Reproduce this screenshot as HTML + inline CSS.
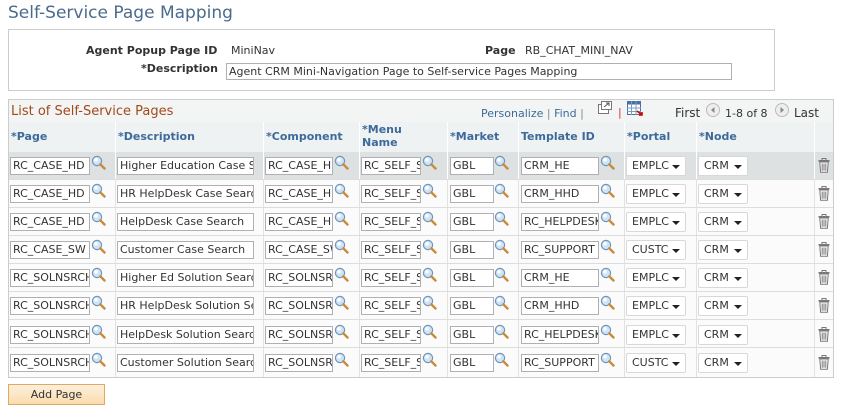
<!DOCTYPE html>
<html><head><style>
*{box-sizing:border-box;margin:0;padding:0}
body{width:842px;height:411px;background:#fff;font-family:"DejaVu Sans","Liberation Sans",sans-serif;font-size:11px;color:#333;position:relative;overflow:hidden}
.a{position:absolute;white-space:nowrap}
.lbl{font-weight:bold;color:#333}
.in{position:absolute;height:18px;border:1px solid #b0b0b0;background:#fff;font-size:11px;line-height:16px;padding-left:2px;overflow:hidden;white-space:nowrap;color:#333}
.sel{position:absolute;height:20px;border:1px solid #d8d8d8;border-radius:2px;background:#fff;font-size:11px;line-height:18px;padding-left:5px;padding-right:16px;overflow:hidden;color:#333}
.sel:after{content:"";position:absolute;right:5px;top:8px;border-left:4px solid transparent;border-right:4px solid transparent;border-top:4px solid #222}
.mg{position:absolute;width:15px;height:15px}
.row{position:absolute;left:9px;width:824px;height:28px;border-bottom:1px solid #ddd}
.vl{position:absolute;top:0;bottom:0;width:1px;background:#e2e2e2}
.th{position:absolute;top:122px;height:30px;font-weight:bold;color:#3d6a9a;font-size:11px;line-height:13px;padding:8px 0 0 3px;white-space:nowrap}
.tr{position:absolute;width:12px;height:15px}
</style></head><body>
<svg width="0" height="0" style="position:absolute"><defs>
<symbol id="m" viewBox="0 0 15 15"><circle cx="6" cy="6" r="4.6" fill="#cfe4f7" stroke="#6f95b8" stroke-width="1.2"/><circle cx="5" cy="4.8" r="1.8" fill="#fff"/><path d="M9.3 9.3 L13.5 13.5" stroke="#c98a3a" stroke-width="2.4" stroke-linecap="round"/></symbol>
<symbol id="t" viewBox="0 0 12 15"><rect x="0.5" y="2" width="11" height="1.6" fill="#777"/><rect x="4" y="0.5" width="4" height="2" fill="none" stroke="#777"/><path d="M1.8 4 L2.6 14.2 H9.4 L10.2 4 Z" fill="#fff" stroke="#777"/><path d="M4.2 5.5 V12.8 M6 5.5 V12.8 M7.8 5.5 V12.8" stroke="#777"/></symbol>
</defs></svg>

<div class="a" style="left:8px;top:3px;font-size:17px;color:#4a6b8e">Self-Service Page Mapping</div>

<div class="a" style="left:8px;top:29px;width:767px;height:62px;border:1px solid #ccc"></div>
<div class="a lbl" style="left:86px;top:44px">Agent Popup Page ID</div>
<div class="a" style="left:231px;top:44px">MiniNav</div>
<div class="a lbl" style="left:485px;top:44px">Page</div>
<div class="a" style="left:525px;top:44px">RB_CHAT_MINI_NAV</div>
<div class="a lbl" style="left:141px;top:62px">*Description</div>
<div class="in" style="left:226px;top:63px;width:506px;height:17px;line-height:15px">Agent CRM Mini-Navigation Page to Self-service Pages Mapping</div>

<div class="a" style="left:8px;top:99px;width:826px;height:279px;border:1px solid #ccc;background:#fafafa"></div>
<div class="a" style="left:9px;top:100px;width:824px;height:22px;background:#f3f5f5"></div>
<div class="a" style="left:11px;top:104px;font-size:13px;color:#a04a1a">List of Self-Service Pages</div>
<div class="a" style="left:481px;top:107px;color:#3d6a9a">Personalize <span style="color:#888">|</span> Find <span style="color:#888">|</span></div>
<svg class="a" style="left:598px;top:101px" width="14" height="13" viewBox="0 0 14 13"><rect x="0.5" y="3.5" width="10" height="9" fill="#fff" stroke="#777"/><rect x="3.5" y="0.5" width="10" height="8" fill="#fff" stroke="#777"/><path d="M6 6 L11 2 M8 2 H11 V5" stroke="#555" fill="none"/></svg>
<div class="a" style="left:618px;top:106px;color:#c33">|</div>
<svg class="a" style="left:627px;top:101px" width="16" height="15" viewBox="0 0 16 15"><rect x="0.5" y="0.5" width="13" height="13" fill="#fff" stroke="#4a6fa5"/><rect x="0.5" y="0.5" width="13" height="3" fill="#4a6fa5"/><path d="M4.5 0 V14 M9 0 V14 M0 7 H14 M0 10.5 H14" stroke="#7a9cc8"/><path d="M10 10 L15 14 M12 14 H15 V11" stroke="#c00" stroke-width="1.6" fill="none"/></svg>
<div class="a" style="left:675px;top:106px;font-size:12px;color:#333">First</div>
<svg class="a" style="left:706px;top:103px" width="14" height="14"><circle cx="7" cy="7" r="6.5" fill="#eee" stroke="#bbb"/><path d="M8.5 4 L5 7 L8.5 10Z" fill="#888"/></svg>
<div class="a" style="left:725px;top:107px;color:#333">1-8 of 8</div>
<svg class="a" style="left:775px;top:103px" width="14" height="14"><circle cx="7" cy="7" r="6.5" fill="#eee" stroke="#bbb"/><path d="M5.5 4 L9 7 L5.5 10Z" fill="#888"/></svg>
<div class="a" style="left:794px;top:106px;font-size:12px;color:#333">Last</div>

<div class="a" style="left:9px;top:122px;width:824px;height:30px;background:#eff2f3"></div>
<div class="th" style="left:8px">*Page</div>
<div class="th" style="left:115px">*Description</div>
<div class="th" style="left:263px">*Component</div>
<div class="th" style="left:359px;padding-top:1px">*Menu<br>Name</div>
<div class="th" style="left:447px">*Market</div>
<div class="th" style="left:518px">Template ID</div>
<div class="th" style="left:624px">*Portal</div>
<div class="th" style="left:696px">*Node</div>
<div class="a" style="left:115px;top:122px;width:1px;height:30px;background:#fff"></div>
<div class="a" style="left:263px;top:122px;width:1px;height:30px;background:#fff"></div>
<div class="a" style="left:359px;top:122px;width:1px;height:30px;background:#fff"></div>
<div class="a" style="left:447px;top:122px;width:1px;height:30px;background:#fff"></div>
<div class="a" style="left:518px;top:122px;width:1px;height:30px;background:#fff"></div>
<div class="a" style="left:624px;top:122px;width:1px;height:30px;background:#fff"></div>
<div class="a" style="left:696px;top:122px;width:1px;height:30px;background:#fff"></div>
<div class="a" style="left:814px;top:122px;width:1px;height:30px;background:#fff"></div>

<div class="row" style="top:152px;background:#dde1e1"><div class="vl" style="left:106px;background:#fff"></div><div class="vl" style="left:254px;background:#fff"></div><div class="vl" style="left:350px;background:#fff"></div><div class="vl" style="left:438px;background:#fff"></div><div class="vl" style="left:509px;background:#fff"></div><div class="vl" style="left:615px;background:#fff"></div><div class="vl" style="left:687px;background:#fff"></div><div class="vl" style="left:805px;background:#fff"></div>
<div class="in" style="left:1px;top:5px;width:80px">RC_CASE_HD</div><svg class="mg" style="left:82px;top:3px"><use href="#m"/></svg>
<div class="in" style="left:108px;top:5px;width:137px">Higher Education Case S</div>
<div class="in" style="left:256px;top:5px;width:68px">RC_CASE_HD</div><svg class="mg" style="left:325px;top:3px"><use href="#m"/></svg>
<div class="in" style="left:352px;top:5px;width:60px">RC_SELF_SE</div><svg class="mg" style="left:413px;top:3px"><use href="#m"/></svg>
<div class="in" style="left:441px;top:5px;width:44px">GBL</div><svg class="mg" style="left:485px;top:3px"><use href="#m"/></svg>
<div class="in" style="left:512px;top:5px;width:78px">CRM_HE</div><svg class="mg" style="left:591px;top:3px"><use href="#m"/></svg>
<div class="sel" style="left:617px;top:4px;width:60px">EMPLC</div>
<div class="sel" style="left:689px;top:4px;width:50px">CRM</div>
<svg class="tr" style="left:809px;top:6px"><use href="#t"/></svg></div>

<div class="row" style="top:180px;background:#fbfbfb"><div class="vl" style="left:106px"></div><div class="vl" style="left:254px"></div><div class="vl" style="left:350px"></div><div class="vl" style="left:438px"></div><div class="vl" style="left:509px"></div><div class="vl" style="left:615px"></div><div class="vl" style="left:687px"></div><div class="vl" style="left:805px"></div>
<div class="in" style="left:1px;top:5px;width:80px">RC_CASE_HD</div><svg class="mg" style="left:82px;top:3px"><use href="#m"/></svg>
<div class="in" style="left:108px;top:5px;width:137px">HR HelpDesk Case Searc</div>
<div class="in" style="left:256px;top:5px;width:68px">RC_CASE_HD</div><svg class="mg" style="left:325px;top:3px"><use href="#m"/></svg>
<div class="in" style="left:352px;top:5px;width:60px">RC_SELF_SE</div><svg class="mg" style="left:413px;top:3px"><use href="#m"/></svg>
<div class="in" style="left:441px;top:5px;width:44px">GBL</div><svg class="mg" style="left:485px;top:3px"><use href="#m"/></svg>
<div class="in" style="left:512px;top:5px;width:78px">CRM_HHD</div><svg class="mg" style="left:591px;top:3px"><use href="#m"/></svg>
<div class="sel" style="left:617px;top:4px;width:60px">EMPLC</div>
<div class="sel" style="left:689px;top:4px;width:50px">CRM</div>
<svg class="tr" style="left:809px;top:6px"><use href="#t"/></svg></div>

<div class="row" style="top:208px;background:#fbfbfb"><div class="vl" style="left:106px"></div><div class="vl" style="left:254px"></div><div class="vl" style="left:350px"></div><div class="vl" style="left:438px"></div><div class="vl" style="left:509px"></div><div class="vl" style="left:615px"></div><div class="vl" style="left:687px"></div><div class="vl" style="left:805px"></div>
<div class="in" style="left:1px;top:5px;width:80px">RC_CASE_HD</div><svg class="mg" style="left:82px;top:3px"><use href="#m"/></svg>
<div class="in" style="left:108px;top:5px;width:137px">HelpDesk Case Search</div>
<div class="in" style="left:256px;top:5px;width:68px">RC_CASE_HD</div><svg class="mg" style="left:325px;top:3px"><use href="#m"/></svg>
<div class="in" style="left:352px;top:5px;width:60px">RC_SELF_SE</div><svg class="mg" style="left:413px;top:3px"><use href="#m"/></svg>
<div class="in" style="left:441px;top:5px;width:44px">GBL</div><svg class="mg" style="left:485px;top:3px"><use href="#m"/></svg>
<div class="in" style="left:512px;top:5px;width:78px">RC_HELPDESK</div><svg class="mg" style="left:591px;top:3px"><use href="#m"/></svg>
<div class="sel" style="left:617px;top:4px;width:60px">EMPLC</div>
<div class="sel" style="left:689px;top:4px;width:50px">CRM</div>
<svg class="tr" style="left:809px;top:6px"><use href="#t"/></svg></div>

<div class="row" style="top:236px;background:#fbfbfb"><div class="vl" style="left:106px"></div><div class="vl" style="left:254px"></div><div class="vl" style="left:350px"></div><div class="vl" style="left:438px"></div><div class="vl" style="left:509px"></div><div class="vl" style="left:615px"></div><div class="vl" style="left:687px"></div><div class="vl" style="left:805px"></div>
<div class="in" style="left:1px;top:5px;width:80px">RC_CASE_SW</div><svg class="mg" style="left:82px;top:3px"><use href="#m"/></svg>
<div class="in" style="left:108px;top:5px;width:137px">Customer Case Search</div>
<div class="in" style="left:256px;top:5px;width:68px">RC_CASE_SW</div><svg class="mg" style="left:325px;top:3px"><use href="#m"/></svg>
<div class="in" style="left:352px;top:5px;width:60px">RC_SELF_SE</div><svg class="mg" style="left:413px;top:3px"><use href="#m"/></svg>
<div class="in" style="left:441px;top:5px;width:44px">GBL</div><svg class="mg" style="left:485px;top:3px"><use href="#m"/></svg>
<div class="in" style="left:512px;top:5px;width:78px">RC_SUPPORT</div><svg class="mg" style="left:591px;top:3px"><use href="#m"/></svg>
<div class="sel" style="left:617px;top:4px;width:60px">CUSTC</div>
<div class="sel" style="left:689px;top:4px;width:50px">CRM</div>
<svg class="tr" style="left:809px;top:6px"><use href="#t"/></svg></div>

<div class="row" style="top:264px;background:#fbfbfb"><div class="vl" style="left:106px"></div><div class="vl" style="left:254px"></div><div class="vl" style="left:350px"></div><div class="vl" style="left:438px"></div><div class="vl" style="left:509px"></div><div class="vl" style="left:615px"></div><div class="vl" style="left:687px"></div><div class="vl" style="left:805px"></div>
<div class="in" style="left:1px;top:5px;width:80px">RC_SOLNSRCH</div><svg class="mg" style="left:82px;top:3px"><use href="#m"/></svg>
<div class="in" style="left:108px;top:5px;width:137px">Higher Ed Solution Searc</div>
<div class="in" style="left:256px;top:5px;width:68px">RC_SOLNSRCH</div><svg class="mg" style="left:325px;top:3px"><use href="#m"/></svg>
<div class="in" style="left:352px;top:5px;width:60px">RC_SELF_SE</div><svg class="mg" style="left:413px;top:3px"><use href="#m"/></svg>
<div class="in" style="left:441px;top:5px;width:44px">GBL</div><svg class="mg" style="left:485px;top:3px"><use href="#m"/></svg>
<div class="in" style="left:512px;top:5px;width:78px">CRM_HE</div><svg class="mg" style="left:591px;top:3px"><use href="#m"/></svg>
<div class="sel" style="left:617px;top:4px;width:60px">EMPLC</div>
<div class="sel" style="left:689px;top:4px;width:50px">CRM</div>
<svg class="tr" style="left:809px;top:6px"><use href="#t"/></svg></div>

<div class="row" style="top:292px;background:#fbfbfb"><div class="vl" style="left:106px"></div><div class="vl" style="left:254px"></div><div class="vl" style="left:350px"></div><div class="vl" style="left:438px"></div><div class="vl" style="left:509px"></div><div class="vl" style="left:615px"></div><div class="vl" style="left:687px"></div><div class="vl" style="left:805px"></div>
<div class="in" style="left:1px;top:5px;width:80px">RC_SOLNSRCH</div><svg class="mg" style="left:82px;top:3px"><use href="#m"/></svg>
<div class="in" style="left:108px;top:5px;width:137px">HR HelpDesk Solution Se</div>
<div class="in" style="left:256px;top:5px;width:68px">RC_SOLNSRCH</div><svg class="mg" style="left:325px;top:3px"><use href="#m"/></svg>
<div class="in" style="left:352px;top:5px;width:60px">RC_SELF_SE</div><svg class="mg" style="left:413px;top:3px"><use href="#m"/></svg>
<div class="in" style="left:441px;top:5px;width:44px">GBL</div><svg class="mg" style="left:485px;top:3px"><use href="#m"/></svg>
<div class="in" style="left:512px;top:5px;width:78px">CRM_HHD</div><svg class="mg" style="left:591px;top:3px"><use href="#m"/></svg>
<div class="sel" style="left:617px;top:4px;width:60px">EMPLC</div>
<div class="sel" style="left:689px;top:4px;width:50px">CRM</div>
<svg class="tr" style="left:809px;top:6px"><use href="#t"/></svg></div>

<div class="row" style="top:320px;background:#fbfbfb"><div class="vl" style="left:106px"></div><div class="vl" style="left:254px"></div><div class="vl" style="left:350px"></div><div class="vl" style="left:438px"></div><div class="vl" style="left:509px"></div><div class="vl" style="left:615px"></div><div class="vl" style="left:687px"></div><div class="vl" style="left:805px"></div>
<div class="in" style="left:1px;top:6px;width:80px">RC_SOLNSRCH</div><svg class="mg" style="left:82px;top:4px"><use href="#m"/></svg>
<div class="in" style="left:108px;top:6px;width:137px">HelpDesk Solution Searc</div>
<div class="in" style="left:256px;top:6px;width:68px">RC_SOLNSRCH</div><svg class="mg" style="left:325px;top:4px"><use href="#m"/></svg>
<div class="in" style="left:352px;top:6px;width:60px">RC_SELF_SE</div><svg class="mg" style="left:413px;top:4px"><use href="#m"/></svg>
<div class="in" style="left:441px;top:6px;width:44px">GBL</div><svg class="mg" style="left:485px;top:4px"><use href="#m"/></svg>
<div class="in" style="left:512px;top:6px;width:78px">RC_HELPDESK</div><svg class="mg" style="left:591px;top:4px"><use href="#m"/></svg>
<div class="sel" style="left:617px;top:5px;width:60px">EMPLC</div>
<div class="sel" style="left:689px;top:5px;width:50px">CRM</div>
<svg class="tr" style="left:809px;top:7px"><use href="#t"/></svg></div>

<div class="row" style="top:348px;height:29px;background:#fbfbfb;border-bottom:none"><div class="vl" style="left:106px"></div><div class="vl" style="left:254px"></div><div class="vl" style="left:350px"></div><div class="vl" style="left:438px"></div><div class="vl" style="left:509px"></div><div class="vl" style="left:615px"></div><div class="vl" style="left:687px"></div><div class="vl" style="left:805px"></div>
<div class="in" style="left:1px;top:6px;width:80px">RC_SOLNSRCH</div><svg class="mg" style="left:82px;top:4px"><use href="#m"/></svg>
<div class="in" style="left:108px;top:6px;width:137px">Customer Solution Searc</div>
<div class="in" style="left:256px;top:6px;width:68px">RC_SOLNSRCH</div><svg class="mg" style="left:325px;top:4px"><use href="#m"/></svg>
<div class="in" style="left:352px;top:6px;width:60px">RC_SELF_SE</div><svg class="mg" style="left:413px;top:4px"><use href="#m"/></svg>
<div class="in" style="left:441px;top:6px;width:44px">GBL</div><svg class="mg" style="left:485px;top:4px"><use href="#m"/></svg>
<div class="in" style="left:512px;top:6px;width:78px">RC_SUPPORT</div><svg class="mg" style="left:591px;top:4px"><use href="#m"/></svg>
<div class="sel" style="left:617px;top:5px;width:60px">CUSTC</div>
<div class="sel" style="left:689px;top:5px;width:50px">CRM</div>
<svg class="tr" style="left:809px;top:7px"><use href="#t"/></svg></div>

<div class="a" style="left:8px;top:384px;width:97px;height:21px;border:1px solid #e0a860;background:linear-gradient(#fdf0dc,#fbdcae);text-align:center;line-height:19px;color:#333">Add Page</div>
</body></html>
